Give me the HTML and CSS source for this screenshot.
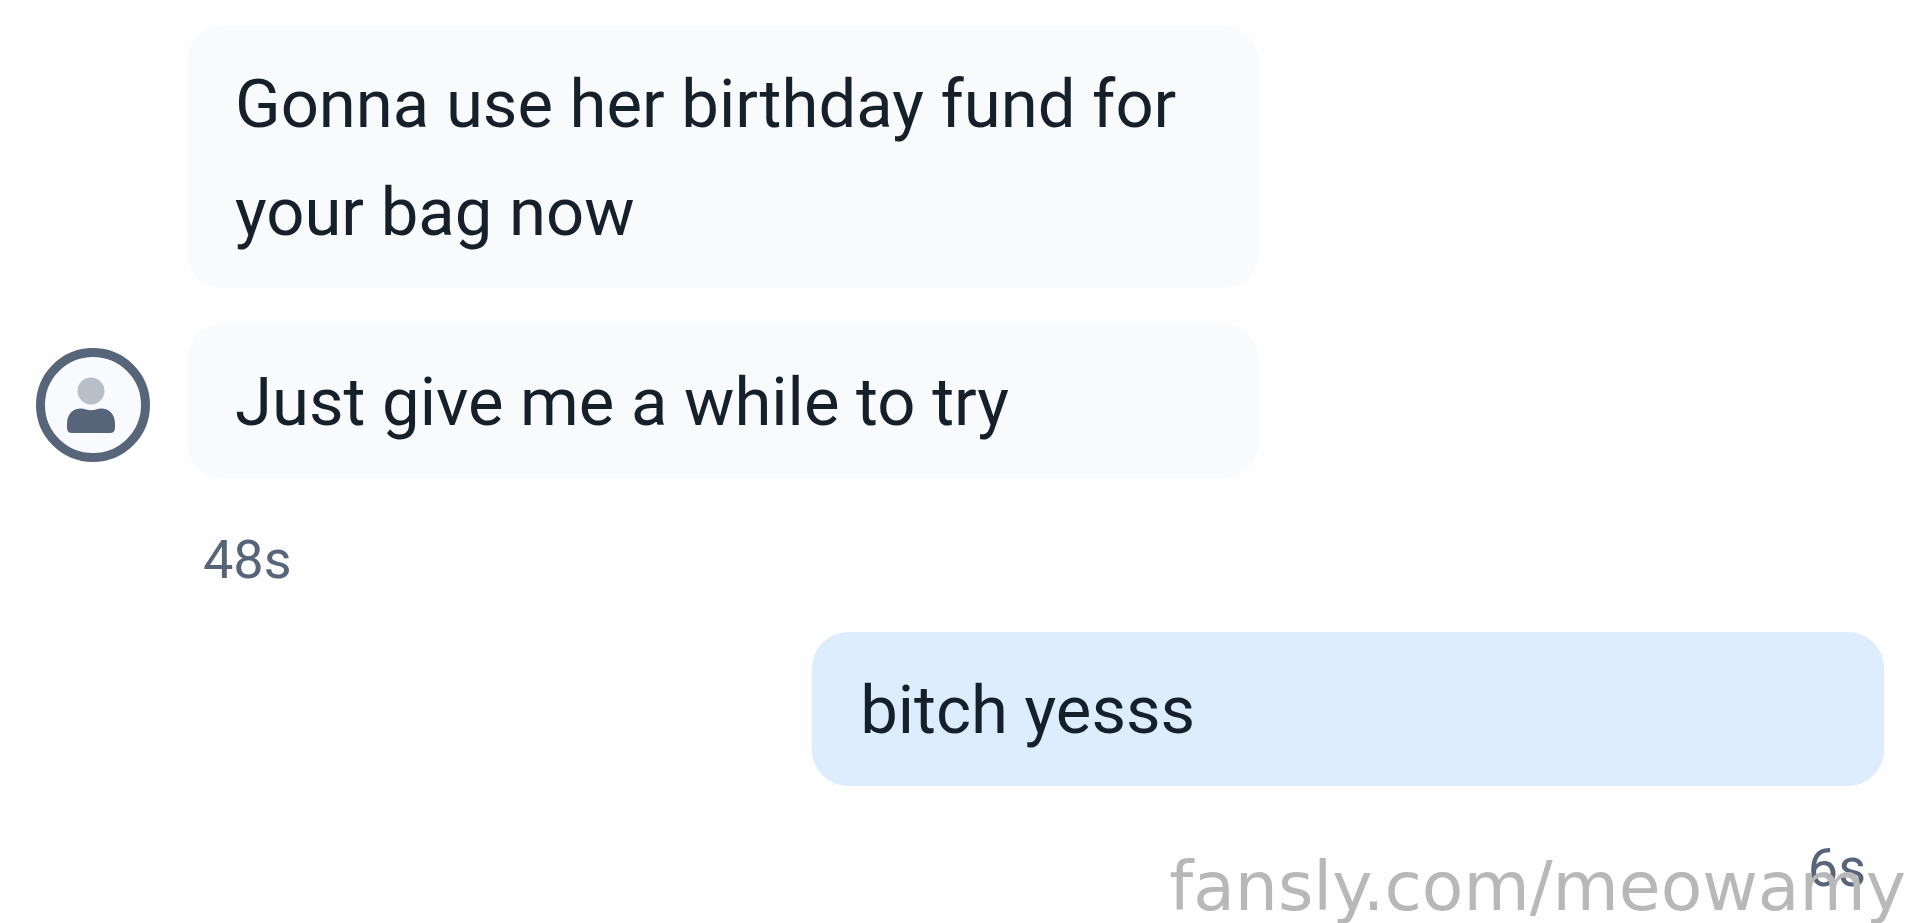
FILE: index.html
```html
<!DOCTYPE html>
<html lang="en">
<head>
<meta charset="utf-8">
<meta name="viewport" content="width=device-width, initial-scale=1">
<title>Messages</title>
<link rel="stylesheet" href="styles.css">
</head>
<body>
<main class="thread">
  <div class="row incoming">
    <p class="bubble">Gonna use her birthday fund for your bag now</p>
  </div>
  <div class="row incoming">
    <svg class="avatar" viewBox="0 0 114 114" role="img" aria-label="Profile">
      <circle cx="57" cy="57" r="52.5" fill="#f8fafd" stroke="#566579" stroke-width="9"/>
      <circle cx="55" cy="43" r="13.5" fill="#b8bfc9"/>
      <path d="M44 60.500Q48 60.500 50 61.500Q55 63 60 61.500Q62 60.500 66 60.500C74 61 79 67 79 76V80Q79 85 74 85H36Q31 85 31 80V76C31 67 36 61 44 60.500Z" fill="#566579"/>
    </svg>
    <p class="bubble">Just give me a while to try</p>
  </div>
  <time class="stamp incoming-stamp">48s</time>
  <div class="row outgoing">
    <p class="bubble">bitch yesss</p>
  </div>
  <time class="stamp outgoing-stamp">6s</time>
</main>
<div class="watermark">fansly.com/meowamy</div>
</body>
</html>
```
FILE: styles.css
```css
* {
  box-sizing: border-box;
}

body {
  margin: 0;
  min-height: 100vh;
  position: relative;
  overflow: hidden;
  background: #fefefe;
  color: #15202b;
  font-family: Roboto, "Liberation Sans", sans-serif;
}

.thread {
  display: flex;
  flex-direction: column;
  padding: 26px 36px 0;
}

.row {
  display: flex;
  align-items: flex-end;
  margin-bottom: 36px;
}

.incoming {
  justify-content: flex-start;
}

.incoming .bubble {
  margin-left: 151px;
}

.incoming .avatar + .bubble {
  margin-left: 37px;
}

.outgoing {
  justify-content: flex-end;
}

.avatar {
  flex: none;
  width: 114px;
  height: 114px;
  margin-bottom: 16px;
}

.bubble {
  width: 58%;
  margin: 0;
  padding: 24px 48px 22px;
  border-radius: 36px;
  background: #f8fafc;
  font-size: 67px;
  line-height: 108px;
}

.outgoing .bubble {
  background: #deedfd;
}

.stamp {
  color: #566579;
  font-size: 54px;
  line-height: 64px;
}

.incoming-stamp {
  margin: 14px 0 40px 167px;
}

.outgoing-stamp {
  align-self: flex-end;
  margin: 14px 18px 0 0;
}

.watermark {
  position: absolute;
  right: 14px;
  bottom: 2px;
  color: #b8b8b8;
  font-family: "DejaVu Sans", sans-serif;
  font-size: 68px;
  line-height: 68px;
}
```
